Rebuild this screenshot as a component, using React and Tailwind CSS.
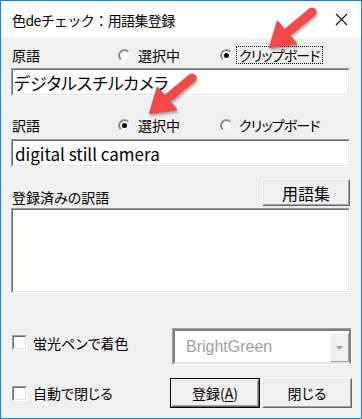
import React from "react";

// ───────────────────────────────────────────
// Classic Win32 3D borders
// ───────────────────────────────────────────
const Sunken = ({ className = "", children }) => (
  <div
    className={`border border-t-[#a0a0a0] border-l-[#a0a0a0] border-b-white border-r-white ${className}`}
  >
    <div className="w-full h-full border border-t-[#696969] border-l-[#696969] border-b-[#e3e3e3] border-r-[#e3e3e3] bg-white">
      {children}
    </div>
  </div>
);

const Raised = ({ className = "", isDefault = false, children }) => (
  <div className={`${isDefault ? "border border-black" : ""} ${className}`}>
    <div className="w-full h-full border border-t-white border-l-white border-b-[#696969] border-r-[#696969]">
      <div className="w-full h-full border border-t-[#e3e3e3] border-l-[#e3e3e3] border-b-[#a0a0a0] border-r-[#a0a0a0] bg-[#f0f0f0] flex items-center justify-center">
        {children}
      </div>
    </div>
  </div>
);

const Radio = ({ checked }) => (
  <div className="w-[13px] h-[13px] rounded-full border border-t-[#a0a0a0] border-l-[#a0a0a0] border-b-white border-r-white shrink-0">
    <div className="w-full h-full rounded-full border border-t-[#696969] border-l-[#696969] border-b-[#e3e3e3] border-r-[#e3e3e3] bg-white flex items-center justify-center">
      {checked && <div className="w-[5px] h-[5px] rounded-full bg-black" />}
    </div>
  </div>
);

const Checkbox = () => <Sunken className="w-[15px] h-[15px] shrink-0" />;

// Red annotation arrow (tail → tip)
const Arrow = ({ dx = 0, dy = 0 }) => (
  <g transform={`translate(${dx} ${dy})`}>
    <line x1="312" y1="12" x2="288" y2="32" stroke="#f24a4a" strokeWidth="9" strokeLinecap="round" />
    <polygon points="270,47 277.5,22 296,43.5" fill="#f24a4a" stroke="#f24a4a" strokeWidth="2" strokeLinejoin="round" />
  </g>
);

export default function App() {
  return (
    <div className="w-[362px] h-[419px] relative border border-[#1883d7] bg-[#f0f0f0] flex flex-col font-['Noto_Sans_CJK_JP',sans-serif] [font-feature-settings:'palt'] text-black overflow-hidden">
      {/* TITLE BAR */}
      <div className="h-[37px] bg-white flex items-center justify-between pl-[11px] pr-[13px] shrink-0">
        <span className="text-[14px] leading-none [font-feature-settings:normal] tracking-[-0.6px]">
          色deチェック：用語集登録
        </span>
        <svg width="13" height="13" viewBox="0 0 13 13">
          <path d="M1 1L12 12M12 1L1 12" stroke="#111" strokeWidth="1.1" />
        </svg>
      </div>

      {/* BODY */}
      <div className="flex flex-col pl-[10px] pr-[11px] pt-[7px] text-[14px]">
        {/* 原語 row */}
        <div className="h-[20px] flex items-center">
          <span className="w-[107px] pl-[1px] leading-none">原語</span>
          <div className="w-[102px] flex items-center gap-[7px]">
            <Radio />
            <span className="leading-none">選択中</span>
          </div>
          <div className="flex items-center gap-[3px]">
            <Radio checked />
            <span className="leading-none border border-dotted border-black px-[2px] py-[1px] tracking-[-0.8px]">
              クリップボード
            </span>
          </div>
        </div>

        <Sunken className="mt-[3px] h-[28px]">
          <div className="h-full flex items-center pl-[1px] text-[17px] leading-none">デジタルスチルカメラ</div>
        </Sunken>

        {/* 訳語 row */}
        <div className="mt-[19px] h-[20px] flex items-center">
          <span className="w-[107px] pl-[1px] leading-none">訳語</span>
          <div className="w-[102px] flex items-center gap-[7px]">
            <Radio checked />
            <span className="leading-none">選択中</span>
          </div>
          <div className="flex items-center gap-[6px]">
            <Radio />
            <span className="leading-none tracking-[-0.8px]">クリップボード</span>
          </div>
        </div>

        <Sunken className="mt-[4px] h-[28px]">
          <div className="h-full flex items-center pl-[2px] text-[17px] leading-none">digital still camera</div>
        </Sunken>

        {/* 登録済みの訳語 row */}
        <div className="mt-[12px] h-[27px] flex items-end">
          <span className="pl-[1px] pb-[2px] leading-none">登録済みの訳語</span>
          <Raised className="ml-auto w-[88px] h-[27px]">
            <span className="text-[16px] leading-none">用語集</span>
          </Raised>
        </div>

        <Sunken className="mt-[2px] h-[85px]" />

        {/* 蛍光ペン row */}
        <div className="mt-[35px] h-[37px] flex items-center">
          <div className="flex items-center gap-[6px] pl-[1px] mt-[-8px]">
            <Checkbox />
            <span className="leading-none">蛍光ペンで着色</span>
          </div>
          <div className="ml-auto mr-[-2px] w-[180px] h-[37px] border border-t-[#a0a0a0] border-l-[#a0a0a0] border-b-white border-r-white">
            <div className="w-full h-full border-2 border-t-[#808080] border-l-[#808080] border-b-[#e3e3e3] border-r-[#808080] bg-white flex items-stretch">
              <span className="flex-1 flex items-center pl-[11px] text-[16px] text-[#a0a0a0] leading-none font-['Liberation_Sans',sans-serif]">
                BrightGreen
              </span>
              <div className="w-[19px] mt-[2px] border border-t-white border-l-white border-b-[#a0a0a0] border-r-[#a0a0a0] bg-[#f0f0f0] flex items-center justify-center">
                <svg width="7" height="4" viewBox="0 0 7 4">
                  <polygon points="0,0 7,0 3.5,4" fill="#a0a0a0" />
                </svg>
              </div>
            </div>
          </div>
        </div>

        {/* 自動で閉じる row */}
        <div className="mt-[13px] h-[30px] flex items-center">
          <div className="flex items-center gap-[6px] pl-[1px]">
            <Checkbox />
            <span className="leading-none">自動で閉じる</span>
          </div>
          <div className="ml-auto mr-[-2px] flex gap-[2px]">
            <Raised isDefault className="w-[90px] h-[30px]">
              <span className="leading-none">
                登録(<span className="underline underline-offset-2">A</span>)
              </span>
            </Raised>
            <Raised className="w-[90px] h-[30px]">
              <span className="leading-none">閉じる</span>
            </Raised>
          </div>
        </div>
      </div>

      {/* ANNOTATION ARROWS */}
      <svg
        className="absolute -left-px -top-px pointer-events-none drop-shadow-[1px_2px_1.5px_rgba(0,0,0,0.35)]"
        width="362"
        height="419"
        viewBox="0 0 362 419"
      >
        <Arrow />
        <Arrow dx={-120} dy={66} />
      </svg>
    </div>
  );
}
